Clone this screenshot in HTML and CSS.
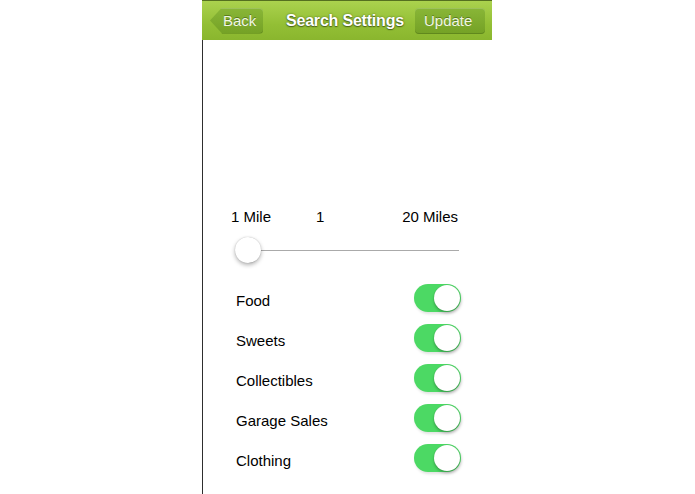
FILE: index.html
```html
<!DOCTYPE html>
<html>
<head>
<meta charset="utf-8">
<link rel="stylesheet" href="styles.css">
</head>
<body>
<div class="phone">
  <div class="navbar">
    <div class="btn back">Back</div>
    <div class="title">Search Settings</div>
    <div class="btn update">Update</div>
  </div>
  <div class="content">
    <div class="range-labels">
      <span class="min">1 Mile</span>
      <span class="val">1</span>
      <span class="max">20 Miles</span>
    </div>
    <div class="slider">
      <div class="track"></div>
      <div class="thumb"></div>
    </div>
    <div class="list">
      <div class="row"><span class="label">Food</span><span class="toggle"></span></div>
      <div class="row"><span class="label">Sweets</span><span class="toggle"></span></div>
      <div class="row"><span class="label">Collectibles</span><span class="toggle"></span></div>
      <div class="row"><span class="label">Garage Sales</span><span class="toggle"></span></div>
      <div class="row"><span class="label">Clothing</span><span class="toggle"></span></div>
    </div>
  </div>
</div>
</body>
</html>
```
FILE: styles.css
```css
html, body {
  margin: 0;
  padding: 0;
  background: #ffffff;
}
body {
  font-family: "Liberation Sans", Arial, Helvetica, sans-serif;
  color: #000;
}
.phone {
  margin-left: 202px;
  width: 290px;
  height: 494px;
  display: flex;
  flex-direction: column;
}
.navbar {
  height: 39px;
  border-top: 1px solid #55701f;
  background: linear-gradient(#abd24e, #93bf35 60%, #8ab62e);
  display: flex;
  align-items: center;
  padding: 0 7px 0 8px;
}
.btn {
  height: 26px;
  line-height: 26px;
  font-size: 15px;
  color: #f1f6e4;
  text-shadow: 0 -1px 0 rgba(40, 60, 10, 0.45);
  background: linear-gradient(#89b637, #74a125);
  box-shadow: inset 0 1px 0 rgba(255, 255, 255, 0.18), inset 0 -1px 0 rgba(60, 90, 15, 0.35);
  border-radius: 4px;
  box-sizing: border-box;
}
.back {
  width: 53px;
  padding-left: 13px;
  clip-path: polygon(12px 0, 100% 0, 100% 100%, 12px 100%, 0 50%);
}
.title {
  margin-left: 23px;
  font-size: 16px;
  font-weight: bold;
  color: #ffffff;
  letter-spacing: -0.2px;
  text-shadow: 0 0 2px rgba(50, 70, 10, 0.75), 0 1px 1px rgba(40, 55, 10, 0.6);
}
.update {
  margin-left: auto;
  width: 70px;
  padding-left: 9px;
}
.content {
  flex: 1;
  border-left: 1px solid #2e2e2e;
  padding: 167px 31px 0 28px;
}
.range-labels {
  display: grid;
  grid-template-columns: 85px auto 1fr;
  height: 20px;
  line-height: 20px;
  font-size: 15px;
  margin-right: 3px;
}
.range-labels .max {
  text-align: right;
}
.slider {
  position: relative;
  margin: 10px 2px 0 4px;
  height: 26px;
}
.track {
  position: absolute;
  left: 13px;
  right: 0;
  top: 13px;
  height: 1px;
  background: #aaaaaa;
}
.thumb {
  position: absolute;
  left: 0;
  top: 0;
  width: 26px;
  height: 26px;
  border-radius: 50%;
  background: #ffffff;
  box-shadow: 0 2px 4px rgba(0, 0, 0, 0.3), 0 0 1px rgba(0, 0, 0, 0.25);
}
.list {
  margin-top: 15px;
}
.row {
  height: 40px;
  display: flex;
  align-items: center;
  justify-content: space-between;
  padding-left: 5px;
}
.label {
  font-size: 15px;
  padding-top: 4px;
}
.toggle {
  position: relative;
  width: 47px;
  height: 28px;
  border-radius: 14px;
  background: #4cd964;
  box-shadow: 1px 2px 3px rgba(0, 0, 0, 0.12);
}
.toggle::after {
  content: "";
  position: absolute;
  right: 1px;
  top: 1px;
  width: 26px;
  height: 26px;
  border-radius: 50%;
  background: #ffffff;
  box-shadow: 0 2px 3px rgba(0, 0, 0, 0.25), 0 0 1px rgba(0, 0, 0, 0.2);
}
```
